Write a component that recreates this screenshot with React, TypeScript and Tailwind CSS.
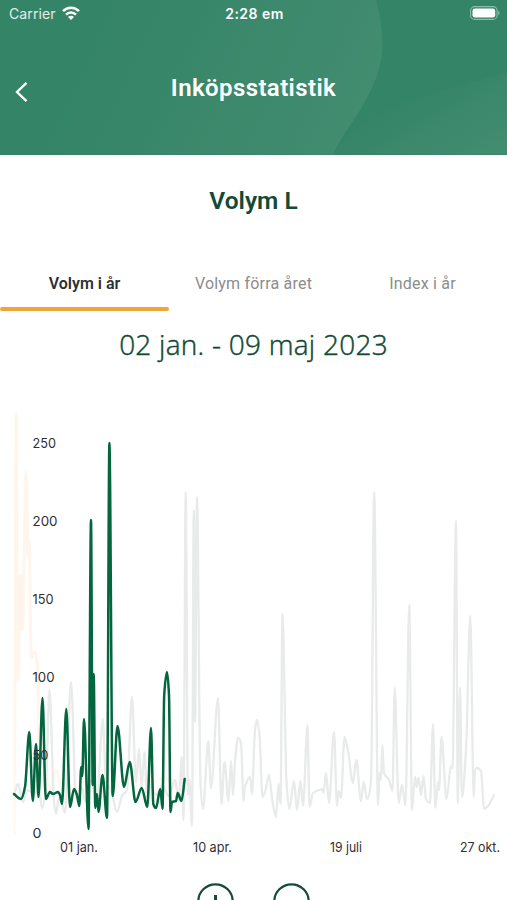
import { useState } from 'react'
import clsx from 'clsx'

type Point = [number, number]

const tabs = [
  { id: 'current', label: 'Volym i år' },
  { id: 'previous', label: 'Volym förra året' },
  { id: 'index', label: 'Index i år' },
]

const yTicks = [
  { label: '250', y: 53, width: 23.5 },
  { label: '200', y: 131, width: 25 },
  { label: '150', y: 209, width: 21 },
  { label: '100', y: 287, width: 22 },
  { label: '50', y: 365, width: 16 },
  { label: '0', y: 443, width: 9 },
]

const xTicks = [
  { label: '01 jan.', x: 60, width: 38 },
  { label: '10 apr.', x: 193, width: 39 },
  { label: '19 juli', x: 330, width: 32 },
  { label: '27 okt.', x: 460, width: 40 },
]

const current: Point[] = [
  [14, 404], [21, 409], [25, 397], [29.3, 342], [32.8, 411], [36, 354], [38.5, 407], [42.5, 308], [45.8, 409],
  [50, 402], [53, 404], [58, 402], [60, 405], [62, 414], [66.3, 319], [70, 417], [74, 399], [77, 405], [79.3, 416],
  [81.2, 377], [82.3, 386], [84, 329], [88.5, 439], [91, 130], [92.7, 395], [93.7, 284], [95.3, 418], [97, 404],
  [98.5, 422], [102.5, 385], [107, 428], [109.4, 53], [112.7, 406], [117.5, 336], [124, 397], [129.8, 372],
  [135.5, 412], [141.7, 398], [147.3, 417], [151, 338], [153.3, 414], [156, 418], [160.3, 399], [162.5, 419],
  [164.2, 305], [167, 282], [169, 305], [170.5, 422], [172, 412], [176, 411], [177.7, 403], [181.5, 411], [184.7, 389],
]

const previous: Point[] = [
  [14, 405], [18, 394], [23, 412], [27, 400], [34, 404], [39, 400], [42, 418], [46, 396], [49.5, 300], [54, 412],
  [56, 424], [59, 408], [61, 410], [65, 423], [71, 292], [76, 408], [81, 397], [86, 412], [91, 390], [97, 410],
  [102.8, 329], [106, 392], [111, 400], [117, 422], [122, 406], [127, 400], [132, 307], [136, 393], [139, 359],
  [141.5, 397], [144.5, 362], [147, 408], [151, 395], [156, 405], [162, 396], [169, 406], [175, 390], [179, 410],
  [181.8, 367], [183.5, 430], [185.7, 102], [188, 405], [189.5, 390], [192, 436], [193.8, 120], [195, 332],
  [197, 107], [200.5, 394], [203, 419], [208.3, 351], [211, 398], [218, 308], [221.5, 414], [224.5, 372],
  [228.5, 411], [231, 371], [233, 405], [235, 372], [238, 348], [241, 353], [243.5, 411], [245, 397], [250, 387],
  [252, 404], [255, 340], [257, 330], [259.5, 345], [262.5, 407], [265.5, 400], [269, 385], [272, 408],
  [276, 427], [278.5, 394], [280.5, 414], [282.5, 224], [286.5, 392], [289.3, 419], [294, 391], [297, 420],
  [300.5, 391], [303, 416], [307.5, 335], [309.5, 417], [313, 403], [319, 400], [322.5, 399], [323.5, 403],
  [326, 383], [329, 413], [334, 342], [337, 416], [338.5, 401], [341, 408], [344.5, 347], [348, 361], [353, 393],
  [356.3, 370], [361, 411], [363.7, 392], [367, 409], [371, 392], [374.2, 102], [378, 415], [379.5, 383],
  [381, 390], [382.3, 355], [384, 383], [389, 390], [392.5, 401], [394.7, 298], [398.7, 413], [402, 395],
  [405.5, 415], [409.2, 215], [412, 420], [415, 387], [416.5, 397], [418.5, 388], [421, 405], [423.5, 386],
  [426, 409], [430, 413], [433, 334], [435.3, 418], [438, 392], [439, 400], [441.5, 347], [446.5, 409],
  [451, 376], [452.5, 378], [456, 131], [457.8, 413], [460, 298], [462, 407], [466, 360], [470.3, 226],
  [473.7, 407], [475, 380], [477, 378], [481, 381], [484, 419], [488, 416], [494, 405],
]

const index: Point[] = [
  [14.5, 444], [16.3, 24], [17.6, 290], [20.5, 185], [22.5, 240], [26, 82], [28, 165], [29, 150], [31.3, 268],
  [35, 262], [38, 285], [38.8, 400], [45, 376], [50, 400], [56, 380], [62, 400], [75, 396], [90, 402], [110, 398],
  [130, 387], [150, 392], [165, 388], [185, 410],
]

// Monotone cubic interpolation, keeps every peak at its data point.
function toPath(points: Point[]) {
  const slope = (i: number) =>
    (points[i + 1][1] - points[i][1]) / (points[i + 1][0] - points[i][0])
  const tangents = points.map((_, i) => {
    if (i === 0) return slope(0)
    if (i === points.length - 1) return slope(i - 1)
    const a = slope(i - 1)
    const b = slope(i)
    return a * b <= 0 ? 0 : (2 * a * b) / (a + b)
  })
  let d = `M${points[0][0]} ${points[0][1]}`
  for (let i = 0; i < points.length - 1; i++) {
    const [x0, y0] = points[i]
    const [x1, y1] = points[i + 1]
    const dx = (x1 - x0) / 3
    d += `C${x0 + dx} ${y0 + tangents[i] * dx} ${x1 - dx} ${y1 - tangents[i + 1] * dx} ${x1} ${y1}`
  }
  return d
}

function StatusBar() {
  return (
    <div className="grid h-7 grid-cols-3 items-center pr-[7px] pl-[9px] font-['Inter'] text-[14px] leading-none text-white">
      <div className="flex items-center gap-[6px] text-white/85">
        <span className="tracking-[0.1px]">Carrier</span>
        <svg className="mb-[2px] h-[14px] w-[18px] text-white" viewBox="0 0 18 14" fill="none" stroke="currentColor">
          <path d="M1 5.2C5.5 .6 12.5 .6 17 5.2" strokeWidth="2.5" />
          <path d="M4 8.6c2.9-2.9 7.1-2.9 10 0" strokeWidth="2.5" />
          <path d="M9 14 6 11c1.7-1.6 4.3-1.6 6 0z" fill="currentColor" stroke="none" />
        </svg>
      </div>
      <span className="text-center text-[14px] font-semibold tracking-[0.45px]">2:28 em</span>
      <svg className="mb-[2px] h-[14px] w-[30px] justify-self-end" viewBox="0 0 30 14">
        <rect x=".6" y=".6" width="26.5" height="12.8" rx="4" fill="none" stroke="white" strokeOpacity=".45" strokeWidth="1.1" />
        <rect x="2.5" y="2.5" width="22.7" height="9" rx="2.3" fill="white" />
        <path d="M28.3 5v4.2c1.7-.6 1.7-3.6 0-4.2z" fill="white" fillOpacity=".5" />
      </svg>
    </div>
  )
}

function Header() {
  return (
    <header className="relative h-[154.5px] shrink-0 overflow-hidden bg-[#348467]">
      <svg className="absolute inset-0 h-full w-full" viewBox="0 0 507 155" preserveAspectRatio="none">
        <defs>
          <linearGradient id="leaf" gradientUnits="userSpaceOnUse" x1="90" y1="40" x2="340" y2="155">
            <stop offset="0" stopColor="#348467" />
            <stop offset="1" stopColor="#428c70" />
          </linearGradient>
          <linearGradient id="hill" gradientUnits="userSpaceOnUse" x1="400" y1="95" x2="445" y2="175">
            <stop offset="0" stopColor="#348467" />
            <stop offset="1" stopColor="#428c70" />
          </linearGradient>
        </defs>
        <path d="M0 0H376C388 45 382 70 368 96C358 117 343 133 333 155H0z" fill="url(#leaf)" />
        <path d="M333 155C352 125 385 106 425 96C458 87 482 79 507 73V155z" fill="url(#hill)" />
      </svg>
      <div className="relative">
        <StatusBar />
        <div className="grid h-[120px] grid-cols-[60px_1fr_60px] items-center">
          <button className="mt-2 ml-[14px] w-4" aria-label="Tillbaka">
            <svg className="h-[22px] w-4" viewBox="0 0 16 22" fill="none" stroke="white" strokeWidth="2.4">
              <path d="M12.5 1.8 3 11l9.5 9.2" />
            </svg>
          </button>
          <h1 className="text-center font-['Roboto'] text-[24px] font-semibold tracking-[0.4px] text-white">
            Inköpsstatistik
          </h1>
        </div>
      </div>
    </header>
  )
}

function VolumeChart() {
  return (
    <svg className="block h-[480px] w-full" viewBox="0 0 507 480">
      <defs>
        <linearGradient id="index-fade" gradientUnits="userSpaceOnUse" x1="0" y1="24" x2="0" y2="444">
          <stop offset="0" stopColor="#fff6ea" />
          <stop offset=".6" stopColor="#fff5ea" />
          <stop offset="1" stopColor="#fffaf5" />
        </linearGradient>
      </defs>
      <g fill="none" strokeLinecap="round" strokeLinejoin="round">
        <path d={toPath(index)} stroke="url(#index-fade)" strokeWidth="3" />
        <path d={toPath(previous)} stroke="#e8ebea" strokeWidth="2.3" />
        <path d={toPath(current)} stroke="#04663f" strokeWidth="2.5" />
      </g>
      <g className="font-['Inter'] text-[13.5px]" fill="#303030">
        {yTicks.map((t) => (
          <text key={t.label} x="32.5" y={t.y + 5} textLength={t.width} lengthAdjust="spacingAndGlyphs">
            {t.label}
          </text>
        ))}
        {xTicks.map((t) => (
          <text key={t.label} x={t.x} y="462" textLength={t.width} lengthAdjust="spacingAndGlyphs">
            {t.label}
          </text>
        ))}
      </g>
    </svg>
  )
}

export default function App() {
  const [active, setActive] = useState('current')

  return (
    <main className="flex h-[900px] w-full flex-col overflow-hidden bg-white font-['Roboto']">
      <Header />
      <h2 className="mt-[30.5px] text-center text-[24.5px] leading-8 font-semibold text-[#124a35]">Volym L</h2>

      <div className="mt-[38px] grid h-[56px] shrink-0 grid-cols-3">
        {tabs.map((tab) => (
          <button
            key={tab.id}
            onClick={() => setActive(tab.id)}
            className={clsx(
              'flex flex-col items-center justify-between pt-[17px] text-[16px] leading-6',
              active === tab.id ? 'font-semibold text-[#303030]' : 'tracking-[0.2px] text-[#8c8c8c]',
            )}
          >
            {tab.label}
            <span className={clsx('h-1 w-full rounded-full', active === tab.id && 'bg-[#efa638]')} />
          </button>
        ))}
      </div>

      <p className="mt-[13px] text-center font-['Open_Sans'] text-[28px] leading-10 font-light tracking-[0.25px] text-[#124a35] [-webkit-text-stroke:0.45px_#124a35]">
        02 jan. - 09 maj 2023
      </p>

      <div className="mt-[26px] shrink-0">
        <VolumeChart />
      </div>

      <div className="mt-[13px] flex shrink-0 justify-center gap-[39px] text-[#164b37]">
        <button aria-label="Zooma in">
          <svg className="h-[37px] w-[37px]" viewBox="0 0 37 37" fill="none" stroke="currentColor" strokeWidth="2.2">
            <circle cx="18.5" cy="18.5" r="17.2" />
            <path d="M18.5 12v13M12 18.5h13" strokeWidth="3" />
          </svg>
        </button>
        <button aria-label="Zooma ut">
          <svg className="h-[37px] w-[37px]" viewBox="0 0 37 37" fill="none" stroke="currentColor" strokeWidth="2.2">
            <circle cx="18.5" cy="18.5" r="17.2" />
            <path d="M12 18.5h13" strokeWidth="3" />
          </svg>
        </button>
      </div>
    </main>
  )
}
